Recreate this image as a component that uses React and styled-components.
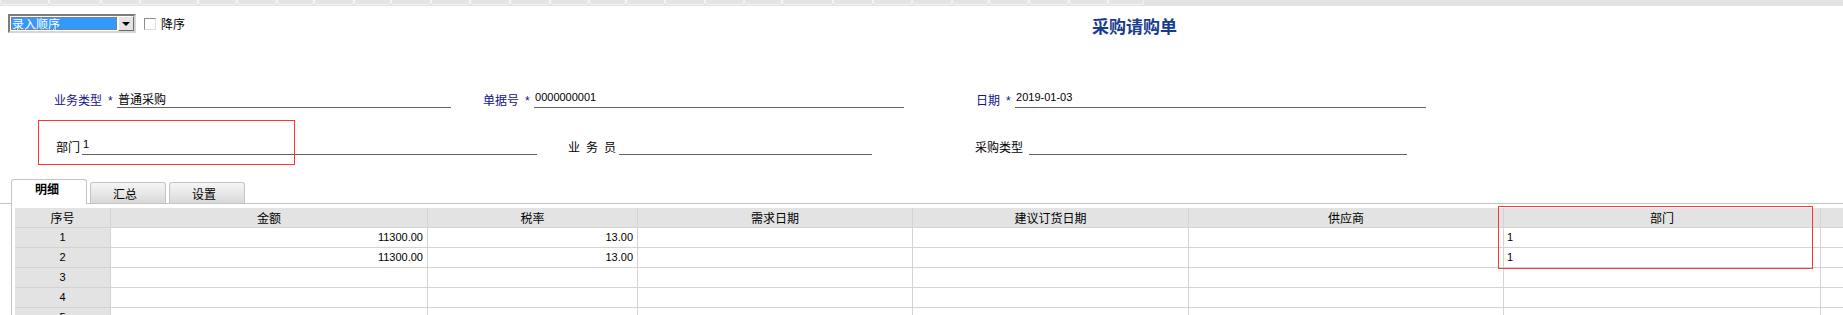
import React from "react";
import styled, { createGlobalStyle } from "styled-components";

const Global = createGlobalStyle`
  html, body { margin: 0; padding: 0; background: #fff; overflow: hidden; }
  body {
    font-family: "Liberation Sans", "Noto Sans CJK SC", sans-serif;
    font-size: 12px;
    color: #000;
  }
`;

const Page = styled.div`
  width: 1843px;
  height: 315px;
  overflow: hidden;
`;

const TopBar = styled.div`
  height: 6px;
  background: #e2e2e2;
  display: flex;
`;

const Seg = styled.div`
  width: ${(p) => p.$w}px;
  height: 5px;
  box-sizing: border-box;
  border: 1px solid #f3f3f3;
  border-top: none;
  border-radius: 0 0 3px 3px;
  background: #e4e4e4;
`;

const Toolbar = styled.div`
  display: flex;
  align-items: center;
  height: 19px;
  margin: 8px 0 0 8px;
`;

const Select = styled.div`
  width: 128px;
  height: 19px;
  box-sizing: border-box;
  display: flex;
  border: 2px solid;
  border-color: #7c7c7c #d6d6d6 #d6d6d6 #7c7c7c;
  background: #fff;
  padding: 0 0 0 1px;
`;

const SelectValue = styled.div`
  flex: 1;
  background: #3399ff;
  color: #fff;
  font-family: "Noto Sans CJK SC", sans-serif;
  font-size: 12px;
  line-height: 13px;
  padding-left: 1px;
  outline: 1px dotted #c07010;
  outline-offset: -1px;
  margin: 1px 1px 1px 0;
`;

const DropBtn = styled.div`
  width: 16px;
  box-sizing: border-box;
  background: #e4e4e4;
  border: 1px solid;
  border-color: #fff #6a6a6a #6a6a6a #fff;
  display: flex;
  align-items: center;
  justify-content: center;
  &::after {
    content: "";
    border-left: 4px solid transparent;
    border-right: 4px solid transparent;
    border-top: 4px solid #000;
    margin-top: 1px;
  }
`;

const CheckBox = styled.span`
  width: 12px;
  height: 12px;
  box-sizing: border-box;
  margin-left: 8px;
  border: 1px solid;
  border-color: #8c8c8c #dcdcdc #dcdcdc #8c8c8c;
  background: #fff;
`;

const CheckLabel = styled.span`
  margin-left: 5px;
  font-family: "Noto Sans CJK SC", sans-serif;
  font-size: 12px;
`;

const Title = styled.div`
  margin-left: 907px;
  font-family: "Noto Sans CJK SC", sans-serif;
  font-size: 17px;
  font-weight: bold;
  color: #173c8c;
  line-height: 19px;
  margin-top: 3px;
`;

const FormRow = styled.div`
  position: relative;
  display: flex;
  align-items: flex-end;
  height: 16px;
  padding-left: ${(p) => p.$pl}px;
  margin-top: ${(p) => p.$mt}px;
`;

const Field = styled.div`
  display: flex;
  align-items: flex-end;
  margin-right: ${(p) => p.$mr || 0}px;
`;

const Label = styled.span`
  font-family: "Noto Sans CJK SC", sans-serif;
  color: ${(p) => (p.$req ? "#12128a" : "#000")};
  line-height: 16px;
  white-space: nowrap;
  letter-spacing: ${(p) => p.$ls || 0}px;
  margin-right: ${(p) => p.$gap || 0}px;
`;

const Star = styled.span`
  color: #12128a;
  font-size: 12px;
  line-height: 14px;
  width: 5px;
  margin: 0 4px 0 6px;
`;

const Input = styled.div`
  width: ${(p) => p.$w}px;
  height: 16px;
  box-sizing: border-box;
  border-bottom: 1px solid #646464;
  line-height: ${(p) => (p.$num ? 11 : 14)}px;
  padding-left: 1px;
  font-size: ${(p) => (p.$num ? 11 : 12)}px;
  font-family: ${(p) =>
    p.$num ? '"Liberation Sans", sans-serif' : '"Noto Sans CJK SC", sans-serif'};
  white-space: nowrap;
`;

const Mark = styled.div`
  position: absolute;
  left: ${(p) => p.$l}px;
  top: ${(p) => p.$t}px;
  width: ${(p) => p.$w}px;
  height: ${(p) => p.$h}px;
  box-sizing: border-box;
  border: 1px solid #ff3535;
  pointer-events: none;
`;

const TabStrip = styled.div`
  display: flex;
  align-items: flex-end;
  gap: 3px;
  height: 24px;
  margin-top: 24px;
  padding-left: 11px;
  border-bottom: 1px solid #c4c4c4;
`;

const Tab = styled.div`
  width: 76px;
  box-sizing: border-box;
  height: ${(p) => (p.$active ? 25 : 21)}px;
  margin-bottom: ${(p) => (p.$active ? -1 : 0)}px;
  border: 1px solid #c4c4c4;
  border-bottom: none;
  border-radius: 3px 3px 0 0;
  background: ${(p) =>
    p.$active ? "#fff" : "linear-gradient(#f6f6f6, #d9d9d9)"};
  font-family: "Noto Sans CJK SC", sans-serif;
  font-weight: ${(p) => (p.$active ? "bold" : "normal")};
  font-size: 12px;
  line-height: ${(p) => (p.$active ? 17 : 22)}px;
  text-align: center;
  padding-right: ${(p) => (p.$active ? 4 : 6)}px;
`;

const Panel = styled.div`
  margin-left: 11px;
  border-left: 1px solid #c4c4c4;
  padding: 4px 0 0 3px;
`;

const Grid = styled.div`
  position: relative;
  display: grid;
  grid-template-columns: 96px 317px 210px 275px 276px 315px 317px 100px;
  width: max-content;
`;

const Cell = styled.div`
  box-sizing: border-box;
  height: 20px;
  border-right: 1px solid #d3d3d3;
  border-bottom: 1px solid #d3d3d3;
  background: ${(p) => (p.$gray ? "#e3e3e3" : "#fff")};
  text-align: ${(p) => p.$align || "left"};
  padding: 0 ${(p) => (p.$align === "right" ? 4 : 3)}px;
  line-height: 19px;
  white-space: nowrap;
  overflow: hidden;
  font-family: ${(p) =>
    p.$num ? '"Liberation Sans", sans-serif' : '"Noto Sans CJK SC", sans-serif'};
  font-size: ${(p) => (p.$num ? 11 : 12)}px;
`;

const segs = [49, 52, 39, 58, 39, 40, 37, 40, 37, 40, 39, 40, 40, 39, 37, 39, 40, 39, 38, 51, 40, 39, 40, 37, 40, 40, 39, 36];

const headers = ["序号", "金额", "税率", "需求日期", "建议订货日期", "供应商", "部门", ""];
const rows = [
  ["1", "11300.00", "13.00", "", "", "", "1", ""],
  ["2", "11300.00", "13.00", "", "", "", "1", ""],
  ["3", "", "", "", "", "", "", ""],
  ["4", "", "", "", "", "", "", ""],
  ["5", "", "", "", "", "", "", ""],
];

export default function App() {
  return (
    <Page>
      <Global />
      <TopBar>
        {segs.map((w, i) => (
          <Seg key={i} $w={w} />
        ))}
      </TopBar>

      <Toolbar>
        <Select>
          <SelectValue>录入顺序</SelectValue>
          <DropBtn />
        </Select>
        <CheckBox />
        <CheckLabel>降序</CheckLabel>
        <Title>采购请购单</Title>
      </Toolbar>

      <FormRow $pl={54} $mt={59}>
        <Field $mr={32}>
          <Label $req>业务类型</Label>
          <Star>*</Star>
          <Input $w={334}>普通采购</Input>
        </Field>
        <Field $mr={72}>
          <Label $req>单据号</Label>
          <Star>*</Star>
          <Input $w={370} $num>0000000001</Input>
        </Field>
        <Field>
          <Label $req>日期</Label>
          <Star>*</Star>
          <Input $w={411} $num>2019-01-03</Input>
        </Field>
      </FormRow>

      <FormRow $pl={56} $mt={31}>
        <Mark $l={38} $t={-19} $w={257} $h={45} />
        <Field $mr={31}>
          <Label $gap={2}>部门</Label>
          <Input $w={455} $num>1</Input>
        </Field>
        <Field $mr={103}>
          <Label $ls={6} $gap={-3}>业务员</Label>
          <Input $w={253} />
        </Field>
        <Field>
          <Label $gap={6}>采购类型</Label>
          <Input $w={378} />
        </Field>
      </FormRow>

      <TabStrip>
        <Tab $active>明细</Tab>
        <Tab>汇总</Tab>
        <Tab>设置</Tab>
      </TabStrip>

      <Panel>
        <Grid>
          <Mark $l={1483} $t={-2} $w={315} $h={63} />
          {headers.map((h, i) => (
            <Cell key={"h" + i} $gray $align="center">
              {h}
            </Cell>
          ))}
          {rows.map((r, ri) =>
            r.map((v, ci) => (
              <Cell
                key={ri + "-" + ci}
                $gray={ci === 0}
                $num
                $align={ci === 0 ? "center" : ci === 1 || ci === 2 ? "right" : "left"}
              >
                {v}
              </Cell>
            ))
          )}
        </Grid>
      </Panel>
    </Page>
  );
}
